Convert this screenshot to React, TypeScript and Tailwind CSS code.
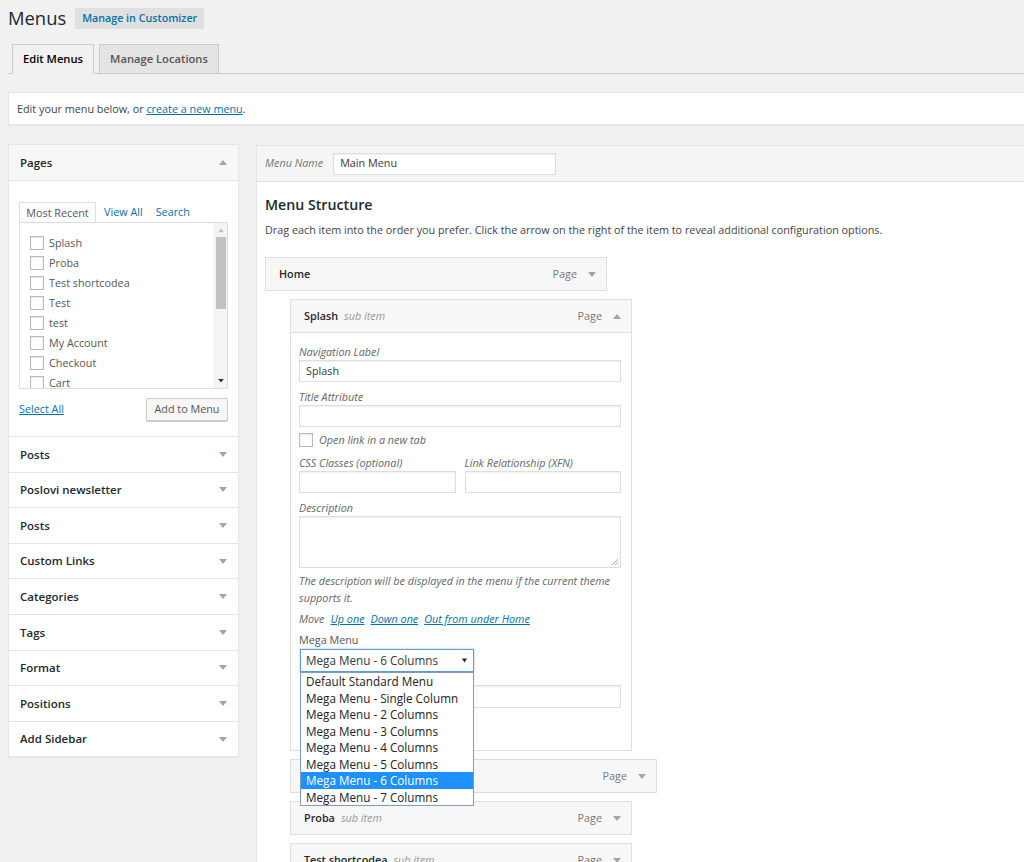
import React from 'react';

const Tri = ({ up = false, className = '' }: { up?: boolean; className?: string }) => (
  <svg width="8" height="5" viewBox="0 0 8 5" className={className}>
    <path d={up ? 'M0 5L4 0L8 5Z' : 'M0 0L8 0L4 5Z'} fill="currentColor" />
  </svg>
);

const Box = ({ className = '', children }: { className?: string; children?: React.ReactNode }) => (
  <div className={`bg-white border border-[#ddd] shadow-[inset_0_1px_2px_rgba(0,0,0,0.07)] ${className}`}>{children}</div>
);

const Check = () => (
  <span className="block shrink-0 w-[14px] h-[14px] bg-white border border-[#b4b9be] shadow-[inset_0_1px_2px_rgba(0,0,0,0.1)]" />
);

const pages = ['Splash', 'Proba', 'Test shortcodea', 'Test', 'test', 'My Account', 'Checkout', 'Cart'];
const sections = ['Posts', 'Poslovi newsletter', 'Posts', 'Custom Links', 'Categories', 'Tags', 'Format', 'Positions', 'Add Sidebar'];
const megaOptions = [
  'Default Standard Menu',
  'Mega Menu - Single Column',
  'Mega Menu - 2 Columns',
  'Mega Menu - 3 Columns',
  'Mega Menu - 4 Columns',
  'Mega Menu - 5 Columns',
  'Mega Menu - 6 Columns',
  'Mega Menu - 7 Columns',
];

const ItemHead = ({ title, sub, width, up = false }: { title?: string; sub?: boolean; width: string; up?: boolean }) => (
  <div className={`${width} h-[34px] flex items-center justify-between pl-[13px] bg-[#f7f7f7] border border-[#dfdfdf]`}>
    <div className="flex items-baseline gap-[6px]">
      {title && <span className="text-[10.8px] font-semibold text-[#23282d]">{title}</span>}
      {sub && <span className="text-[10.8px] italic text-[#999]">sub item</span>}
    </div>
    <div className="flex items-center">
      <span className="text-[10.8px] text-[#777]">Page</span>
      <Tri up={up} className="ml-[11px] mr-[10px] text-[#a0a5aa]" />
    </div>
  </div>
);

const Label = ({ children, className = '' }: { children: React.ReactNode; className?: string }) => (
  <div className={`text-[10.8px] italic text-[#666] leading-[14px] ${className}`}>{children}</div>
);

export default function App() {
  return (
    <div className="w-[1024px] h-[862px] overflow-hidden bg-[#f1f1f1] font-['Open_Sans',sans-serif] text-[#444]">
      {/* title */}
      <div className="flex items-center pl-2 pt-[4px] h-[32px]">
        <h1 className="text-[18.4px] leading-[28px] text-[#23282d]">Menus</h1>
        <span className="ml-[9px] h-[21px] px-[7px] flex items-center bg-[#e0e0e0] text-[10.7px] font-semibold text-[#0073aa]">
          Manage in Customizer
        </span>
      </div>

      {/* tabs */}
      <div className="ml-2 mt-[12px] flex gap-[5px] pl-[4px] border-b border-[#ccc]">
        <div className="-mb-px h-[30px] w-[82px] flex items-center justify-center bg-[#f1f1f1] border border-[#ccc] border-b-[#f1f1f1] text-[11.2px] font-semibold text-[#000]">
          Edit Menus
        </div>
        <div className="h-[29px] w-[120px] flex items-center justify-center bg-[#e4e4e4] border border-b-0 border-[#ccc] text-[11.2px] font-semibold text-[#555]">
          Manage Locations
        </div>
      </div>

      {/* notice */}
      <div className="ml-2 mt-[18px] h-[33px] flex items-center pl-[8px] pt-[2px] bg-white border border-r-0 border-[#e5e5e5] shadow-[0_1px_1px_rgba(0,0,0,0.04)] text-[10.8px]">
        Edit your menu below, or&nbsp;<span className="text-[#0073aa] underline">create a new menu</span>.
      </div>

      <div className="flex mt-[19px] items-start">
        {/* left column */}
        <div className="shrink-0 ml-2 w-[231px] bg-white border border-[#e5e5e5] shadow-[0_1px_1px_rgba(0,0,0,0.04)]">
          <div className="h-[36px] flex items-center justify-between pl-[11px] pr-[11px] bg-[#f7f7f7] border-b border-[#e5e5e5]">
            <span className="text-[11.5px] font-semibold text-[#23282d]">Pages</span>
            <Tri up className="text-[#a0a5aa]" />
          </div>
          <div className="h-[255px] pl-[10px] pr-[10px] pt-[21px]">
            <div className="flex items-end text-[10.8px]">
              <div className="-mb-px relative h-[21px] w-[77px] flex items-center justify-center bg-white border border-b-0 border-[#ddd] text-[#555]">
                Most Recent
              </div>
              <span className="ml-[8px] h-[20px] flex items-center text-[#0073aa]">View All</span>
              <span className="ml-[13px] h-[20px] flex items-center text-[#0073aa]">Search</span>
            </div>
            <div className="relative h-[167px] border border-[#ddd] bg-white overflow-hidden pt-[10px] pl-[10px]">
              {pages.map((p) => (
                <div key={p} className="h-[20px] flex items-center gap-[5px] text-[10.8px] text-[#555]">
                  <Check />
                  <span>{p}</span>
                </div>
              ))}
              <div className="absolute right-0 top-0 bottom-0 w-[13px] bg-[#f4f4f4] border-l border-[#eee]">
                <Tri up className="absolute top-[5px] left-[2px] text-[#bbb] scale-75" />
                <div className="absolute top-[14px] left-[1px] w-[10px] h-[72px] bg-[#c1c1c1]" />
                <Tri className="absolute bottom-[5px] left-[2px] text-[#333] scale-75" />
              </div>
            </div>
            <div className="mt-[9px] flex items-center justify-between">
              <span className="text-[10.8px] text-[#0073aa] underline">Select All</span>
              <span className="h-[23px] w-[82px] flex items-center justify-center bg-[#f7f7f7] border border-[#ccc] rounded-[2px] shadow-[0_1px_0_#ccc] text-[10.8px] text-[#555]">
                Add to Menu
              </span>
            </div>
          </div>
          {sections.map((s, i) => (
            <div key={i} className="h-[35.6px] flex items-center justify-between pl-[11px] pr-[11px] border-t border-[#e5e5e5]">
              <span className="text-[11.5px] font-semibold text-[#23282d]">{s}</span>
              <Tri className="text-[#a0a5aa]" />
            </div>
          ))}
        </div>

        {/* right column */}
        <div className="shrink-0 ml-[17px] mt-[1px] w-[800px] h-[760px] bg-white border border-[#e5e5e5]">
          <div className="h-[36px] flex items-center pl-[8px] bg-[#f5f5f5] border-b border-[#dfdfdf]">
            <span className="text-[10.8px] italic text-[#777]">Menu Name</span>
            <Box className="ml-[10px] w-[223px] h-[22px] flex items-center pl-[6px] text-[10.8px] text-[#32373c]">Main Menu</Box>
          </div>
          <div className="pl-[8px]">
            <h3 className="mt-[14px] text-[14.2px] leading-[18px] font-semibold text-[#23282d]">Menu Structure</h3>
            <p className="mt-[8px] text-[10.8px] leading-[16px]">
              Drag each item into the order you prefer. Click the arrow on the right of the item to reveal additional configuration options.
            </p>

            <div className="mt-[19px]">
              <ItemHead title="Home" width="w-[342px]" />

              <div className="ml-[25px] mt-[8px] w-[342px]">
                <ItemHead title="Splash" sub up width="w-[342px]" />
                <div className="h-[418px] border border-t-0 border-[#dfdfdf] bg-white pl-[8px] pr-[10px] pt-[12px]">
                  <Label>Navigation Label</Label>
                  <Box className="mt-[1px] h-[22px] flex items-center pl-[6px] text-[10.8px] text-[#32373c]">Splash</Box>
                  <Label className="mt-[8px]">Title Attribute</Label>
                  <Box className="mt-[1px] h-[22px]" />
                  <div className="mt-[6px] h-[14px] flex items-center gap-[6px]">
                    <Check />
                    <span className="text-[10.8px] italic text-[#666]">Open link in a new tab</span>
                  </div>
                  <div className="mt-[9px] flex gap-[9px]">
                    <div className="flex-1">
                      <Label>CSS Classes (optional)</Label>
                      <Box className="mt-[1px] h-[22px]" />
                    </div>
                    <div className="flex-1">
                      <Label>Link Relationship (XFN)</Label>
                      <Box className="mt-[1px] h-[22px]" />
                    </div>
                  </div>
                  <Label className="mt-[8px]">Description</Label>
                  <Box className="relative mt-[1px] h-[52px]">
                    <svg width="7" height="7" viewBox="0 0 7 7" className="absolute right-[2px] bottom-[2px] text-[#999]">
                      <path d="M1 7L7 1M4 7L7 4" stroke="currentColor" strokeWidth="0.8" />
                    </svg>
                  </Box>
                  <div className="mt-[4px] text-[10.8px] italic text-[#666] leading-[17px]">
                    The description will be displayed in the menu if the current theme supports it.
                  </div>
                  <div className="mt-[6px] text-[10.8px] italic text-[#666] leading-[14px] flex gap-[6px]">
                    <span>Move</span>
                    <span className="text-[#0073aa] underline">Up one</span>
                    <span className="text-[#0073aa] underline">Down one</span>
                    <span className="text-[#0073aa] underline">Out from under Home</span>
                  </div>
                  <div className="mt-[7px] text-[10.8px] leading-[14px] text-[#555]">Mega Menu</div>
                  <div className="relative z-10 mt-[2px] ml-[1px] w-[174px]">
                    <div className="h-[23px] flex items-center justify-between pl-[5px] pr-[6px] bg-white border border-[#5b9dd9] shadow-[0_0_2px_rgba(30,140,190,0.5)] text-[11.7px] text-[#32373c]">
                      <span>Mega Menu - 6 Columns</span>
                      <svg width="5" height="5" viewBox="0 0 6 5"><path d="M0 0H6L3 5Z" fill="#222" /></svg>
                    </div>
                    <div className="absolute top-full left-0 w-[174px] bg-white border border-[#7f9db9] text-[11.7px] leading-[16.5px] text-[#222]">
                      {megaOptions.map((o) => (
                        <div key={o} className={`pl-[5px] ${o === 'Mega Menu - 6 Columns' ? 'bg-[#1e90ff] text-white' : ''}`}>{o}</div>
                      ))}
                    </div>
                  </div>
                  <Box className="mt-[13px] ml-[1px] h-[23px]" />
                </div>
              </div>

              <div className="ml-[25px] mt-[8px]">
                <ItemHead width="w-[367px]" />
              </div>
              <div className="ml-[25px] mt-[8px]">
                <ItemHead title="Proba" sub width="w-[342px]" />
              </div>
              <div className="ml-[25px] mt-[8px]">
                <ItemHead title="Test shortcodea" sub width="w-[342px]" />
              </div>
            </div>
          </div>
        </div>
      </div>
    </div>
  );
}
